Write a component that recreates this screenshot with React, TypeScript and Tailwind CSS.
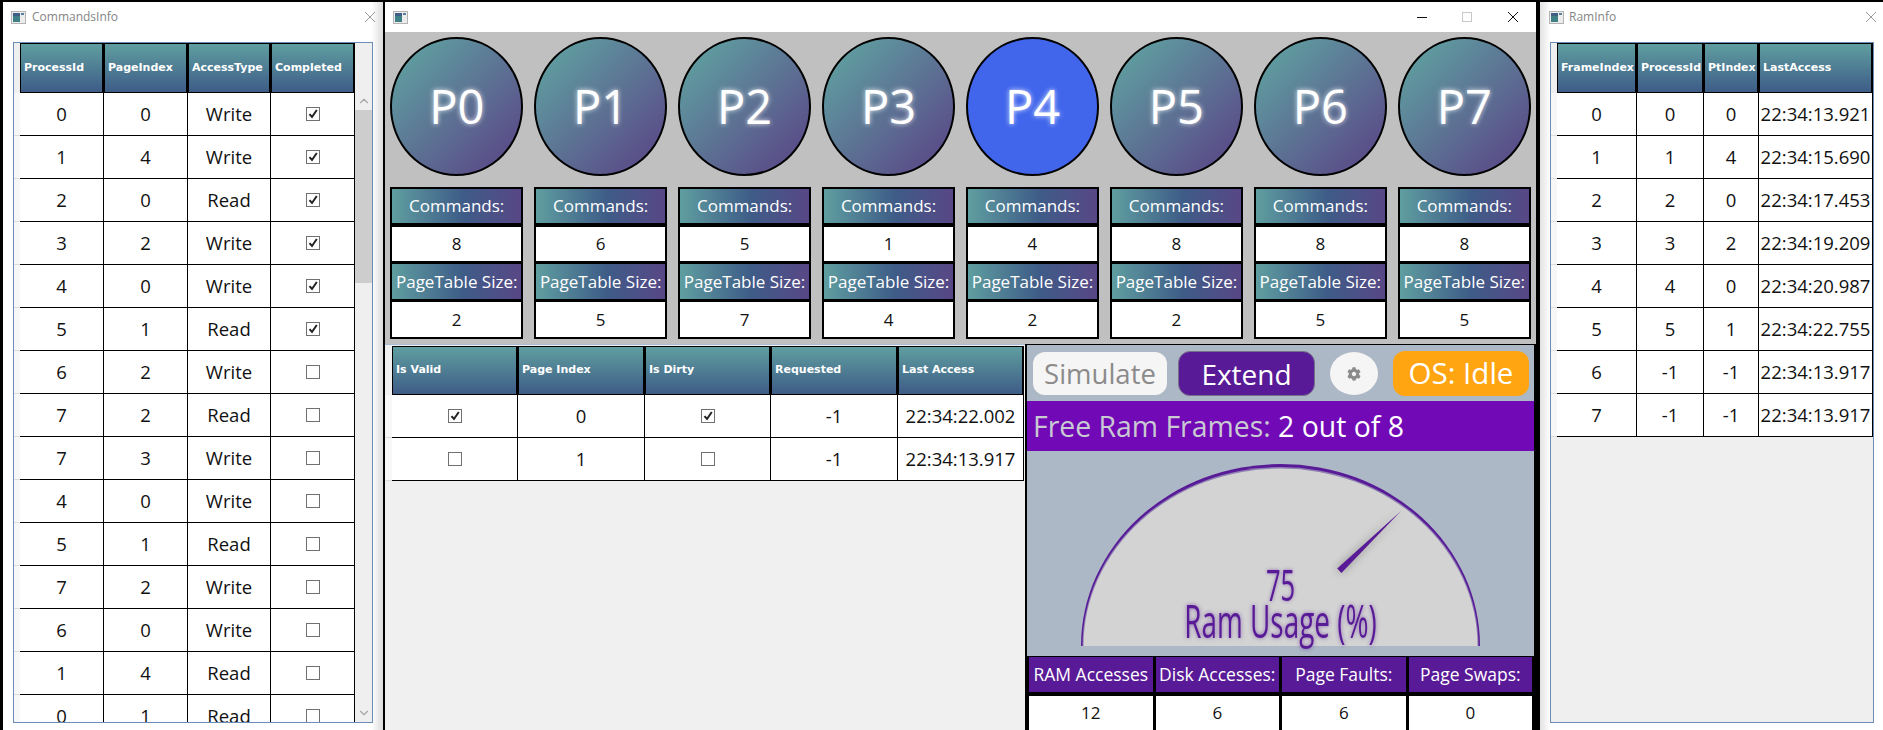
import { ChevronDown, ChevronUp } from 'lucide-react';
import { FaCog } from 'react-icons/fa';

type Cell = string | number | boolean;

const commandRows: Cell[][] = [
  [0, 0, 'Write', true],
  [1, 4, 'Write', true],
  [2, 0, 'Read', true],
  [3, 2, 'Write', true],
  [4, 0, 'Write', true],
  [5, 1, 'Read', true],
  [6, 2, 'Write', false],
  [7, 2, 'Read', false],
  [7, 3, 'Write', false],
  [4, 0, 'Write', false],
  [5, 1, 'Read', false],
  [7, 2, 'Write', false],
  [6, 0, 'Write', false],
  [1, 4, 'Read', false],
  [0, 1, 'Read', false],
];

const ramRows: Cell[][] = [
  [0, 0, 0, '22:34:13.921'],
  [1, 1, 4, '22:34:15.690'],
  [2, 2, 0, '22:34:17.453'],
  [3, 3, 2, '22:34:19.209'],
  [4, 4, 0, '22:34:20.987'],
  [5, 5, 1, '22:34:22.755'],
  [6, -1, -1, '22:34:13.917'],
  [7, -1, -1, '22:34:13.917'],
];

const pageRows: Cell[][] = [
  [true, 0, true, -1, '22:34:22.002'],
  [false, 1, false, -1, '22:34:13.917'],
];

const processes = [
  { name: 'P0', commands: 8, size: 2 },
  { name: 'P1', commands: 6, size: 5 },
  { name: 'P2', commands: 5, size: 7 },
  { name: 'P3', commands: 1, size: 4 },
  { name: 'P4', commands: 4, size: 2, active: true },
  { name: 'P5', commands: 8, size: 2 },
  { name: 'P6', commands: 8, size: 5 },
  { name: 'P7', commands: 8, size: 5 },
];

const ramStats = [
  { label: 'RAM Accesses', value: 12 },
  { label: 'Disk Accesses:', value: 6 },
  { label: 'Page Faults:', value: 6 },
  { label: 'Page Swaps:', value: 0 },
];

function WindowIcon() {
  return (
    <svg width="15" height="13" viewBox="0 0 15 13" className="shrink-0">
      <rect x="0.5" y="0.5" width="14" height="12" fill="#ececec" stroke="#b4b4b4" />
      <rect x="2" y="2" width="7" height="9" fill="#3f7f86" />
      <rect x="2" y="2" width="7" height="3" fill="#3f5f87" />
      <rect x="10" y="2" width="3" height="2" fill="#5a7f9a" />
    </svg>
  );
}

function CheckBox({ checked }: { checked: boolean }) {
  return (
    <div className="w-[14px] h-[14px] border border-[#707070] bg-white flex items-center justify-center">
      {checked && (
        <svg width="12" height="12" viewBox="0 0 12 12">
          <path d="M2.5 6.2 L5 9 L9.8 2" fill="none" stroke="#222" strokeWidth="2" />
        </svg>
      )}
    </div>
  );
}

function DataGrid({
  gridClass,
  headerClass,
  headers,
  rows,
}: {
  gridClass: string;
  headerClass: string;
  headers: string[];
  rows: Cell[][];
}) {
  return (
    <div className="flex flex-col">
      <div className={`grid ${gridClass} ${headerClass} shrink-0`}>
        <div />
        {headers.map((header) => (
          <div
            key={header}
            className="flex items-center pl-[3px] border border-r-2 border-black bg-[linear-gradient(180deg,#5f9ea0,#3e5c87)] text-white text-[11px] font-bold font-['DejaVu_Sans',sans-serif] whitespace-nowrap overflow-hidden"
          >
            {header}
          </div>
        ))}
      </div>
      {rows.map((row, i) => (
        <div key={i} className={`grid ${gridClass} h-[43px] shrink-0`}>
          <div className="bg-[#f7f7f7] border-b border-[#dddddd]" />
          {row.map((cell, j) => (
            <div
              key={j}
              className="flex items-center justify-center bg-white border-b border-r border-black text-[18.5px] text-[#111] whitespace-nowrap overflow-hidden"
            >
              {typeof cell === 'boolean' ? <CheckBox checked={cell} /> : cell}
            </div>
          ))}
        </div>
      ))}
    </div>
  );
}

function ProcessColumn({ name, commands, size, active }: { name: string; commands: number; size: number; active?: boolean }) {
  const labelClass =
    'flex items-center justify-center bg-[linear-gradient(90deg,#5f9ea0,#3e5c87_55%,#584786)] text-white text-[17px] whitespace-nowrap';
  const valueClass = 'flex items-center justify-center bg-white text-[17px] text-[#111]';

  return (
    <div className="flex flex-col">
      <div
        className={`h-[139px] rounded-[50%] border-2 border-black flex items-center justify-center text-white text-[47px] [text-shadow:0_0_5px_rgba(255,255,255,0.85)] ${
          active ? 'bg-[#4166ec]' : 'bg-[linear-gradient(135deg,#5f9ea0_10%,#5a4a88_90%)]'
        }`}
      >
        {name}
      </div>
      <div className="mt-[11px] bg-black p-[2px] flex flex-col">
        <div className={`${labelClass} h-[34px] mb-[4px]`}>Commands:</div>
        <div className={`${valueClass} h-[34px] mb-[3px]`}>{commands}</div>
        <div className={`${labelClass} h-[35px] mb-[3px]`}>PageTable Size:</div>
        <div className={`${valueClass} h-[35px]`}>{size}</div>
      </div>
    </div>
  );
}

function RamGauge() {
  return (
    <div className="relative h-[205px] flex justify-center pt-[13px]">
      <svg width="399" height="182" viewBox="0 0 399 182">
        <path d="M0 182 A199.5 182 0 0 1 399 182 Z" fill="#581a96" />
        <path d="M1.5 182 A198 179 0 0 1 397.5 182 Z" fill="#8f7fb4" />
        <path d="M2.5 182 A197 177.5 0 0 1 396.5 182 Z" fill="#d3d3d3" />
        <polygon
          points="256.2,104.6 260.4,109 320,47"
          fill="#581a96"
          className="[filter:drop-shadow(0_0_4px_rgba(0,0,0,0.35))]"
        />
      </svg>
      <div className="absolute left-0 right-0 top-[103px] text-center text-[44px] leading-[60px] text-[#581a96] scale-x-[0.58] [text-shadow:0_0_5px_rgba(88,26,150,0.55)]">
        75
      </div>
      <div className="absolute left-0 right-0 top-[140px] text-center text-[45px] leading-[60px] text-[#581a96] scale-x-[0.62] whitespace-nowrap [text-shadow:0_0_6px_rgba(88,26,150,0.6)]">
        Ram Usage (%)
      </div>
    </div>
  );
}

function RamPanel() {
  return (
    <div className="w-[511px] shrink-0 bg-black px-[2px] flex flex-col">
      <div className="bg-[#adb8c6] mt-[1px] flex flex-col">
        <div className="h-[56px] flex items-start pl-[6px] pt-[6px]">
          <div className="mt-px w-[134px] h-[43px] rounded-[12px] bg-[#f5f5f5] text-[#8b8b8b] text-[27.5px] flex items-center justify-center">
            Simulate
          </div>
          <div className="ml-[11px] w-[137px] h-[45px] rounded-[12px] bg-[#581a96] border border-[#77708a] text-white text-[28px] flex items-center justify-center">
            Extend
          </div>
          <div className="ml-[15px] mt-px w-[48px] h-[43px] rounded-[50%] bg-[#f5f5f5] text-[#8a8a8a] flex items-center justify-center">
            <FaCog size={14} />
          </div>
          <div className="ml-[15px] w-[136px] h-[45px] rounded-[12px] bg-[#ffa511] text-white text-[29.5px] flex items-center justify-center">
            OS: Idle
          </div>
        </div>
        <div className="h-[50px] bg-[#7209b7] flex items-center pl-[6px] text-[28.4px] text-[#c9c9d2] whitespace-nowrap">
          Free Ram Frames:&nbsp;<span className="text-white">2 out of 8</span>
        </div>
        <RamGauge />
      </div>
      <div className="grid grid-cols-4 gap-x-[3px] px-[2px] pt-[1px]">
        {ramStats.map((stat) => (
          <div key={stat.label} className="flex flex-col">
            <div className="h-[35px] bg-[#581a96] text-white text-[17.5px] flex items-center justify-center whitespace-nowrap">
              {stat.label}
            </div>
            <div className="mt-[4px] h-[34px] bg-white text-[17px] text-[#111] flex items-center justify-center">
              {stat.value}
            </div>
          </div>
        ))}
      </div>
    </div>
  );
}

export default function App() {
  return (
    <div className="w-[1883px] h-[730px] overflow-hidden bg-black flex pt-[2px] font-['Open_Sans',sans-serif]">
      {/* CommandsInfo window */}
      <div className="ml-[3px] w-[380px] shrink-0 flex flex-col bg-[linear-gradient(90deg,#ffffff_97%,#dcdcdc)]">
        <div className="h-[30px] shrink-0 flex items-center pl-[8px] pr-[6px]">
          <WindowIcon />
          <span className="ml-[6px] text-[12px] text-[#858585]">CommandsInfo</span>
          <svg width="12" height="12" viewBox="0 0 12 12" className="ml-auto mr-[1px]">
            <path d="M1 1 L11 11 M11 1 L1 11" stroke="#9a9a9a" fill="none" />
          </svg>
        </div>
        <div className="mt-[10px] ml-[10px] w-[360px] h-[681px] border border-[#6a8cb5] bg-[#efefef] flex overflow-hidden">
          <div className="w-[341px] shrink-0">
            <DataGrid
              gridClass="grid-cols-[6px_84px_84px_83px_84px]"
              headerClass="h-[50px]"
              headers={['ProcessId', 'PageIndex', 'AccessType', 'Completed']}
              rows={commandRows}
            />
          </div>
          <div className="flex-1 flex flex-col items-center text-[#a6a6a6]">
            <div className="h-[49px] shrink-0" />
            <div className="h-[18px] shrink-0 flex items-center justify-center">
              <ChevronUp size={14} />
            </div>
            <div className="h-[173px] w-full shrink-0 bg-[#cdcdcd]" />
            <div className="flex-1" />
            <div className="h-[18px] shrink-0 flex items-center justify-center">
              <ChevronDown size={14} />
            </div>
          </div>
        </div>
      </div>

      {/* main window */}
      <div className="ml-[2px] w-[1151px] shrink-0 flex flex-col bg-[#f0f0f0]">
        <div className="h-[30px] shrink-0 bg-white flex items-center pl-[8px]">
          <WindowIcon />
          <svg width="10" height="10" viewBox="0 0 10 10" className="ml-auto">
            <path d="M0 5.5 H10" stroke="#111" fill="none" />
          </svg>
          <svg width="10" height="10" viewBox="0 0 10 10" className="ml-[35px]">
            <rect x="0.5" y="0.5" width="9" height="9" stroke="#c8c8c8" fill="none" />
          </svg>
          <svg width="10" height="10" viewBox="0 0 10 10" className="ml-[36px] mr-[18px]">
            <path d="M0 0 L10 10 M10 0 L0 10" stroke="#111" fill="none" />
          </svg>
        </div>
        <div className="h-[312px] shrink-0 bg-[#c0c0c0] pl-[5px] pr-[5px] pt-[5px]">
          <div className="grid grid-cols-8 gap-x-[10.5px]">
            {processes.map((process) => (
              <ProcessColumn key={process.name} {...process} />
            ))}
          </div>
        </div>
        <div className="flex-1 flex min-h-0">
          <div className="w-[640px] shrink-0 pt-[1px] border-t border-[#a9bdd4]">
            <DataGrid
              gridClass="grid-cols-[7px_126px_127px_126px_127px_126px]"
              headerClass="h-[49px]"
              headers={['Is Valid', 'Page Index', 'Is Dirty', 'Requested', 'Last Access']}
              rows={pageRows}
            />
          </div>
          <RamPanel />
        </div>
      </div>

      {/* RamInfo window */}
      <div className="ml-[4px] flex-1 flex flex-col bg-[linear-gradient(90deg,#e2e2e2,#ffffff_3%)]">
        <div className="h-[30px] shrink-0 flex items-center pl-[9px] pr-[6px]">
          <WindowIcon />
          <span className="ml-[5px] text-[12px] text-[#858585]">RamInfo</span>
          <svg width="12" height="12" viewBox="0 0 12 12" className="ml-auto">
            <path d="M1 1 L11 11 M11 1 L1 11" stroke="#9a9a9a" fill="none" />
          </svg>
        </div>
        <div className="mt-[10px] ml-[10px] w-[324px] h-[681px] border border-[#6a8cb5] bg-[#efefef] overflow-hidden">
          <DataGrid
            gridClass="grid-cols-[6px_80px_67px_55px_114px]"
            headerClass="h-[50px]"
            headers={['FrameIndex', 'ProcessId', 'PtIndex', 'LastAccess']}
            rows={ramRows}
          />
        </div>
      </div>
    </div>
  );
}
